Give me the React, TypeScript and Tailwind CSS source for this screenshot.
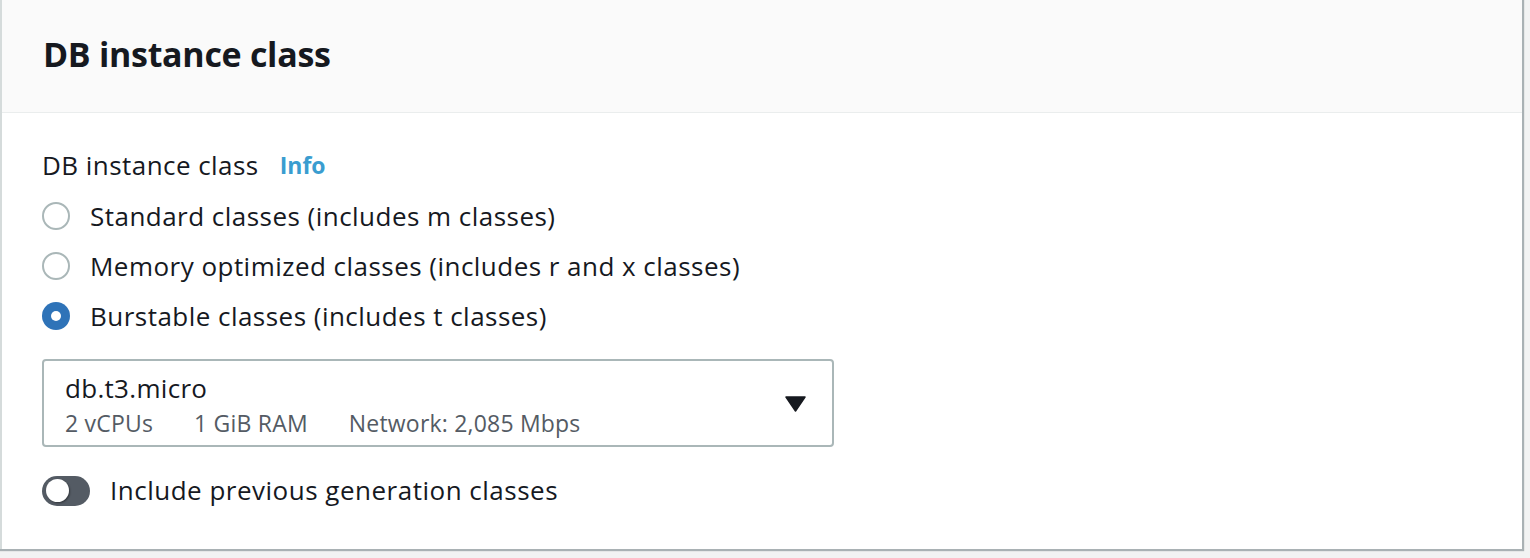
import React from "react";

function Radio({ checked, label }: { checked?: boolean; label: string }) {
  return (
    <div className="flex items-center h-[50px]">
      {checked ? (
        <span className="w-[28px] h-[28px] rounded-full bg-[#2e73b8] flex items-center justify-center">
          <span className="w-[10px] h-[10px] rounded-full bg-white" />
        </span>
      ) : (
        <span className="w-[28px] h-[28px] rounded-full border-[2px] border-[#aab7b8] bg-white" />
      )}
      <span className="ml-[20px] text-[26px] tracking-[0.47px] text-[#16191f]">{label}</span>
    </div>
  );
}

export default function App() {
  return (
    <div
      className="w-[1530px] h-[558px] bg-[#f2f3f3] overflow-hidden"
      style={{ fontFamily: '"Open Sans", "Noto Sans", sans-serif' }}
    >
      <div className="w-[1522px] h-[549px] bg-white border-l-[2px] border-[#d5dbdb] shadow-[1px_1px_1px_1px_rgba(0,28,36,0.3)] flex flex-col">
        <div className="h-[113px] bg-[#fafafa] border-b border-[#eaeded] flex items-center pl-[41px] pb-[4px]">
          <h2 className="text-[34px] font-bold text-[#16191f] tracking-[-0.3px] leading-[40px]">DB instance class</h2>
        </div>
        <div className="pl-[40px] pt-[36px] flex flex-col">
          <div className="flex items-center h-[32px]">
            <span className="text-[26px] tracking-[0.45px] text-[#16191f]">DB instance class</span>
            <span className="ml-[21px] text-[23px] font-bold text-[#3a9dd0]">Info</span>
          </div>
          <div className="flex flex-col mt-[10px]">
            <Radio label="Standard classes (includes m classes)" />
            <Radio label="Memory optimized classes (includes r and x classes)" />
            <Radio checked label="Burstable classes (includes t classes)" />
          </div>
          <div className="mt-[18px] w-[792px] h-[88px] border-[2px] border-[#aab7b8] rounded-[4px] flex items-start justify-between pl-[21px] pr-[26px]">
            <div className="flex flex-col pt-[10px]">
              <span className="text-[26px] tracking-[0.3px] text-[#16191f] leading-[34px]">db.t3.micro</span>
              <div className="flex text-[23px] tracking-[0.2px] text-[#545b64] leading-[36px]">
                <span>2 vCPUs</span>
                <span className="ml-[41px]">1 GiB RAM</span>
                <span className="ml-[41px]">Network: 2,085 Mbps</span>
              </div>
            </div>
            <svg className="mt-[35px]" width="21" height="16" viewBox="0 0 21 16">
              <path d="M1 1 L20 1 L10.5 15 Z" fill="#16191f" stroke="#16191f" strokeWidth="1.5" strokeLinejoin="round" />
            </svg>
          </div>
          <div className="flex items-center mt-[24px]">
            <span className="w-[48px] h-[30px] rounded-full bg-[#545b64] flex items-center pl-[4px]">
              <span className="w-[23px] h-[23px] rounded-full bg-white shadow-[1px_1px_2px_rgba(0,0,0,0.4)]" />
            </span>
            <span className="ml-[20px] text-[26px] tracking-[0.5px] text-[#16191f]">Include previous generation classes</span>
          </div>
        </div>
      </div>
    </div>
  );
}
